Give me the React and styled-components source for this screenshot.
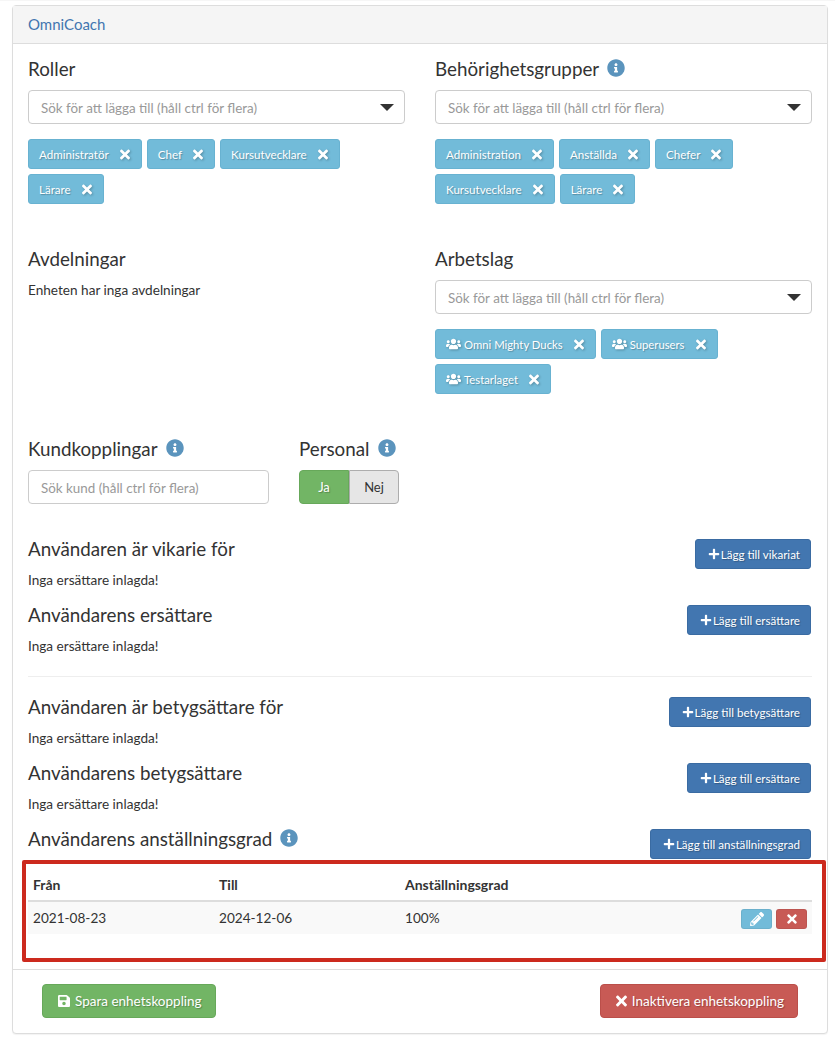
import React from "react";
import styled, { createGlobalStyle } from "styled-components";
import { FaTimes, FaUsers, FaPlus, FaSave, FaPencilAlt, FaInfoCircle } from "react-icons/fa";

const Global = createGlobalStyle`
  html, body {
    margin: 0;
    padding: 0;
    background: #fff;
  }
  body {
    font-family: Lato, "Open Sans", sans-serif;
    font-size: 13px;
    color: #333;
  }
  * { box-sizing: border-box; }
`;

const roles = ["Administratör", "Chef", "Kursutvecklare", "Lärare"];
const groups = ["Administration", "Anställda", "Chefer", "Kursutvecklare", "Lärare"];
const teams = ["Omni Mighty Ducks", "Superusers", "Testarlaget"];

const Chips = ({ items, team }) => (
  <ChipList>
    {items.map((name) => (
      <Chip key={name}>
        {team && <TeamIcon />}
        <ChipLabel $team={team}>{name}</ChipLabel>
        <RemoveIcon />
      </Chip>
    ))}
  </ChipList>
);

const SearchSelect = () => (
  <Select>
    <Placeholder>Sök för att lägga till (håll ctrl för flera)</Placeholder>
    <Caret />
  </Select>
);

const LinkSection = ({ title, action, empty = "Inga ersättare inlagda!" }) => (
  <LinkRow>
    <LinkHead>
      <Heading>{title}</Heading>
      <AddButton>
        <FaPlus size={12} />
        {action}
      </AddButton>
    </LinkHead>
    <Text>{empty}</Text>
  </LinkRow>
);

export default function App() {
  return (
    <Page>
      <Global />
      <Panel>
        <PanelHeader>OmniCoach</PanelHeader>
        <PanelBody>
          <Columns>
            <div>
              <Heading>Roller</Heading>
              <SearchSelect />
              <Chips items={roles} />
            </div>
            <div>
              <Heading>
                Behörighetsgrupper <Info />
              </Heading>
              <SearchSelect />
              <Chips items={groups} />
            </div>
          </Columns>
          <Columns>
            <div>
              <Heading>Avdelningar</Heading>
              <NoUnits>Enheten har inga avdelningar</NoUnits>
            </div>
            <div>
              <Heading>Arbetslag</Heading>
              <SearchSelect />
              <Chips items={teams} team />
            </div>
          </Columns>
          <CustomerRow>
            <CustomerCol>
              <Heading>
                Kundkopplingar <Info />
              </Heading>
              <Select>
                <Placeholder>Sök kund (håll ctrl för flera)</Placeholder>
              </Select>
            </CustomerCol>
            <div>
              <Heading>
                Personal <Info />
              </Heading>
              <Toggle>
                <ToggleOption $active>Ja</ToggleOption>
                <ToggleOption>Nej</ToggleOption>
              </Toggle>
            </div>
          </CustomerRow>
          <LinkSection title="Användaren är vikarie för" action="Lägg till vikariat" />
          <LinkSection title="Användarens ersättare" action="Lägg till ersättare" />
          <Divider />
          <LinkSection title="Användaren är betygsättare för" action="Lägg till betygsättare" />
          <LinkSection title="Användarens betygsättare" action="Lägg till ersättare" />
          <LinkHead>
            <Heading>
              Användarens anställningsgrad <Info />
            </Heading>
            <AddButton>
              <FaPlus size={12} />
              Lägg till anställningsgrad
            </AddButton>
          </LinkHead>
          <TableWrap>
            <Highlight />
            <Table>
              <thead>
                <tr>
                  <Th>Från</Th>
                  <Th>Till</Th>
                  <Th>Anställningsgrad</Th>
                  <Th />
                </tr>
              </thead>
              <tbody>
                <tr>
                  <Td>2021-08-23</Td>
                  <Td>2024-12-06</Td>
                  <Td>100%</Td>
                  <ActionCell>
                    <IconButton $color="#72bbd9">
                      <FaPencilAlt size={14} />
                    </IconButton>
                    <IconButton $color="#c85a55">
                      <FaTimes size={14} />
                    </IconButton>
                  </ActionCell>
                </tr>
              </tbody>
            </Table>
          </TableWrap>
        </PanelBody>
        <PanelFooter>
          <FooterButton $color="#72b565" $border="#67a85a">
            <SaveIcon />
            Spara enhetskoppling
          </FooterButton>
          <FooterButton $color="#c85a55" $border="#bb4f4a">
            <CloseIcon />
            Inaktivera enhetskoppling
          </FooterButton>
        </PanelFooter>
      </Panel>
    </Page>
  );
}

const Page = styled.div`
  padding: 4px 7px 5px 12px;
  width: 835px;
  border-top: 1px solid #f6f6f6;
`;

const Panel = styled.section`
  border: 1px solid #ddd;
  border-radius: 4px;
  background: #fff;
  box-shadow: 0 1px 1px rgba(0, 0, 0, 0.05);
`;

const PanelHeader = styled.header`
  height: 38px;
  padding: 0 15px 2px;
  display: flex;
  align-items: center;
  background: #f5f5f5;
  border-bottom: 1px solid #ddd;
  color: #4276b0;
  font-size: 15px;
`;

const PanelBody = styled.div`
  padding: 10px 15px 0;
`;

const Columns = styled.div`
  display: grid;
  grid-template-columns: 377px 377px;
  column-gap: 30px;
  height: 190px;
`;

const Heading = styled.h3`
  margin: 0;
  height: 28px;
  display: flex;
  align-items: center;
  gap: 8px;
  font-size: 18.8px;
  font-weight: 400;
  color: #333;
  white-space: nowrap;
`;

const Select = styled.div`
  margin-top: 8px;
  height: 34px;
  padding: 0 12px;
  display: flex;
  align-items: center;
  justify-content: space-between;
  border: 1px solid #ccc;
  border-radius: 4px;
  background: #fff;
`;

const Placeholder = styled.span`
  padding-top: 2px;
  color: #999;
  font-size: 13.4px;
`;

const Caret = styled.span`
  width: 0;
  height: 0;
  margin-right: -2px;
  border-left: 7px solid transparent;
  border-right: 7px solid transparent;
  border-top: 7px solid #333;
`;

const ChipList = styled.div`
  margin-top: 15px;
  display: flex;
  flex-wrap: wrap;
  gap: 5px;
`;

const Chip = styled.div`
  height: 30px;
  padding: 0 11px 0 10px;
  display: flex;
  align-items: center;
  gap: 11px;
  background: #72bbd9;
  border: 1px solid #68b2d1;
  border-radius: 3px;
  color: #fff;
  font-size: 11.6px;
  text-shadow: 1px 1px 1px rgba(0, 0, 0, 0.25);

  svg {
    flex: none;
    filter: drop-shadow(1px 1px 1px rgba(0, 0, 0, 0.25));
  }
`;

const TeamIcon = styled(FaUsers)`
  width: 15px;
  height: 12px;
`;

const RemoveIcon = styled(FaTimes)`
  width: 10px;
  height: 15px;
`;

const ChipLabel = styled.span`
  margin-left: ${(p) => (p.$team ? "-8px" : "0")};
  font-size: ${(p) => (p.$team ? "11.3px" : "inherit")};
`;

const Info = styled(FaInfoCircle)`
  width: 18px;
  height: 18px;
  flex: none;
  color: #5b94bd;
`;

const Text = styled.p`
  margin: 0;
  height: 20px;
  line-height: 20px;
  font-size: 13.6px;
  color: #333;
`;

const NoUnits = styled(Text)`
  margin-top: 8px;
`;

const CustomerRow = styled.div`
  display: flex;
  gap: 30px;
  height: 100px;
`;

const CustomerCol = styled.div`
  width: 241px;
`;

const Toggle = styled.div`
  margin-top: 8px;
  width: 100px;
  height: 34px;
  display: flex;
`;

const ToggleOption = styled.div`
  flex: 1;
  display: flex;
  align-items: center;
  justify-content: center;
  font-size: 13px;
  color: ${(p) => (p.$active ? "#fff" : "#333")};
  background: ${(p) => (p.$active ? "#72b565" : "#e6e6e6")};
  border: 1px solid ${(p) => (p.$active ? "#67a85a" : "#adadad")};
  border-radius: ${(p) => (p.$active ? "4px 0 0 4px" : "0 4px 4px 0")};
  text-shadow: ${(p) => (p.$active ? "1px 1px 1px rgba(0, 0, 0, 0.25)" : "none")};
`;

const LinkRow = styled.div`
  height: 66px;
`;

const LinkHead = styled.div`
  height: 36px;
  display: flex;
  align-items: flex-start;
  justify-content: space-between;
  padding-right: 1px;
`;

const AddButton = styled.button`
  height: 30px;
  margin-top: 5px;
  padding: 0 10px 0 12px;
  display: inline-flex;
  align-items: center;
  gap: 1px;
  background: #4276b0;
  border: 1px solid #3a6ba2;
  border-radius: 3px;
  color: #fff;
  font-family: inherit;
  font-size: 11.6px;
  text-shadow: 1px 1px 1px rgba(0, 0, 0, 0.25);
`;

const Divider = styled.hr`
  margin: 10px 0 15px;
  border: 0;
  border-top: 1px solid #eee;
`;

const TableWrap = styled.div`
  position: relative;
  height: 109px;
`;

const Highlight = styled.div`
  position: absolute;
  left: -6px;
  top: 0;
  width: 804px;
  height: 102px;
  border: 4px solid #cc2a1e;
  border-radius: 2px;
  pointer-events: none;
`;

const Table = styled.table`
  width: 784px;
  border-collapse: collapse;
  table-layout: fixed;
  position: relative;
  top: 9px;
  font-size: 13.6px;
`;

const Th = styled.th`
  width: 186px;
  height: 32px;
  padding: 0 5px 1px;
  text-align: left;
  font-size: 14px;
  font-weight: 700;
  color: #333;
  border-bottom: 2px solid #ddd;

  &:last-child {
    width: auto;
  }
`;

const Td = styled.td`
  height: 33px;
  padding: 0 5px;
  background: #f9f9f9;
`;

const ActionCell = styled(Td)`
  text-align: right;
`;

const IconButton = styled.button`
  width: 31px;
  height: 20px;
  margin: 2px 0 0 4px;
  padding: 0;
  vertical-align: middle;
  display: inline-flex;
  align-items: center;
  justify-content: center;
  background: ${(p) => p.$color};
  border: 1px solid rgba(0, 0, 0, 0.06);
  border-radius: 3px;
  color: #fff;
`;

const PanelFooter = styled.footer`
  height: 64px;
  padding: 0 29px 2px;
  display: flex;
  align-items: center;
  justify-content: space-between;
  border-top: 1px solid #ddd;
`;

const FooterButton = styled.button`
  height: 34px;
  padding: 0 13px 0 15px;
  display: inline-flex;
  align-items: center;
  gap: 5px;
  background: ${(p) => p.$color};
  border: 1px solid ${(p) => p.$border};
  border-radius: 4px;
  color: #fff;
  font-family: inherit;
  font-size: 13.5px;
  text-shadow: 1px 1px 1px rgba(0, 0, 0, 0.25);

  svg {
    flex: none;
  }
`;

const SaveIcon = styled(FaSave)`
  width: 12px;
  height: 14px;
`;

const CloseIcon = styled(FaTimes)`
  width: 11px;
  height: 16px;
`;
